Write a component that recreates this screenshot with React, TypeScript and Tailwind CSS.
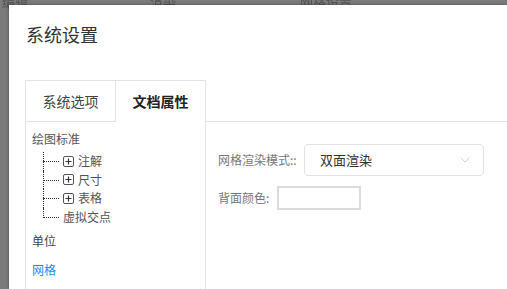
import { ChevronDown } from 'lucide-react';

const font = { fontFamily: '"Noto Sans CJK SC", "Noto Sans", sans-serif' };

function PlusBox() {
  return (
    <span className="w-[11px] h-[11px] border border-[#555] rounded-[2px] flex items-center justify-center shrink-0">
      <svg width="7" height="7" viewBox="0 0 7 7">
        <path d="M3.5 0.5v6M0.5 3.5h6" stroke="#333" strokeWidth="1.2" />
      </svg>
    </span>
  );
}

function TreeItem({ label, plus = true, last = false }: { label: string; plus?: boolean; last?: boolean }) {
  return (
    <div className="relative flex items-center h-[18.5px] pl-[18px]">
      <span className={`absolute left-[11px] top-0 border-l border-dotted border-[#333] ${last ? 'h-[10px]' : 'h-[18.5px]'}`} />
      <span className="absolute left-[11px] top-[9px] w-[16px] border-t border-dotted border-[#333]" />
      <span className="w-[13px]" />
      {plus ? <PlusBox /> : <span className="w-[11px]" />}
      <span className={`${plus ? 'ml-[4px]' : 'ml-[-11px]'} text-[12px] text-[#555]`}>{label}</span>
    </div>
  );
}

export default function App() {
  return (
    <div className="w-[507px] h-[289px] bg-[#7b7b7b] overflow-hidden relative" style={font}>
      {/* menu text behind the mask */}
      <div className="absolute top-[-8px] left-0 w-full text-[13px] text-[#3a3a3a] opacity-60 blur-[0.5px]">
        <span className="absolute left-[2px]">编辑</span>
        <span className="absolute left-[150px]">渲染</span>
        <span className="absolute left-[300px]">网格设置</span>
      </div>
      <div className="absolute left-[9px] top-[5px] right-0 bottom-0 bg-white shadow-[0_0_3px_rgba(0,0,0,0.4)]">
        <div className="pl-[17px] pt-[16px] text-[18px] text-[#333] leading-[26px]">系统设置</div>
        <div className="mt-[33px] ml-[16px] flex flex-col h-[210px]">
          <div className="flex h-[42px]">
            <div className="w-[91px] border border-[#e3e3e3] flex items-center justify-center text-[14px] text-[#444]">系统选项</div>
            <div className="w-[90px] border-t border-r border-[#e3e3e3] flex items-center justify-center text-[14px] font-bold text-[#222]">文档属性</div>
            <div className="flex-1 border-b border-[#e3e3e3]" />
          </div>
          <div className="flex flex-1">
            <div className="w-[181px] border-l border-r border-[#e3e3e3] pl-[6px] pt-[8px]">
              <div className="text-[12px] text-[#555] leading-[18px]">绘图标准</div>
              <div className="mt-[4px]">
                <TreeItem label="注解" />
                <TreeItem label="尺寸" />
                <TreeItem label="表格" />
                <TreeItem label="虚拟交点" plus={false} last />
              </div>
              <div className="mt-[6px] text-[12px] text-[#444] leading-[18px]">单位</div>
              <div className="mt-[11px] text-[12px] text-[#1a8cff] leading-[18px]">网格</div>
            </div>
            <div className="flex-1 pl-[12px] pt-[22px]">
              <div className="flex items-center">
                <span className="text-[12px] text-[#777] w-[86px]">网格渲染模式::</span>
                <div className="w-[180px] h-[32px] border border-[#e2e2e2] rounded-[4px] flex items-center justify-between pl-[15px] pr-[10px]">
                  <span className="text-[13px] text-[#333]">双面渲染</span>
                  <ChevronDown size={16} strokeWidth={1} color="#bbb" />
                </div>
              </div>
              <div className="flex items-center mt-[10px]">
                <span className="text-[12px] text-[#777] w-[59px]">背面颜色:</span>
                <div className="w-[84px] h-[24px] border-2 border-[#dcdcdc]" />
              </div>
            </div>
          </div>
        </div>
      </div>
    </div>
  );
}
